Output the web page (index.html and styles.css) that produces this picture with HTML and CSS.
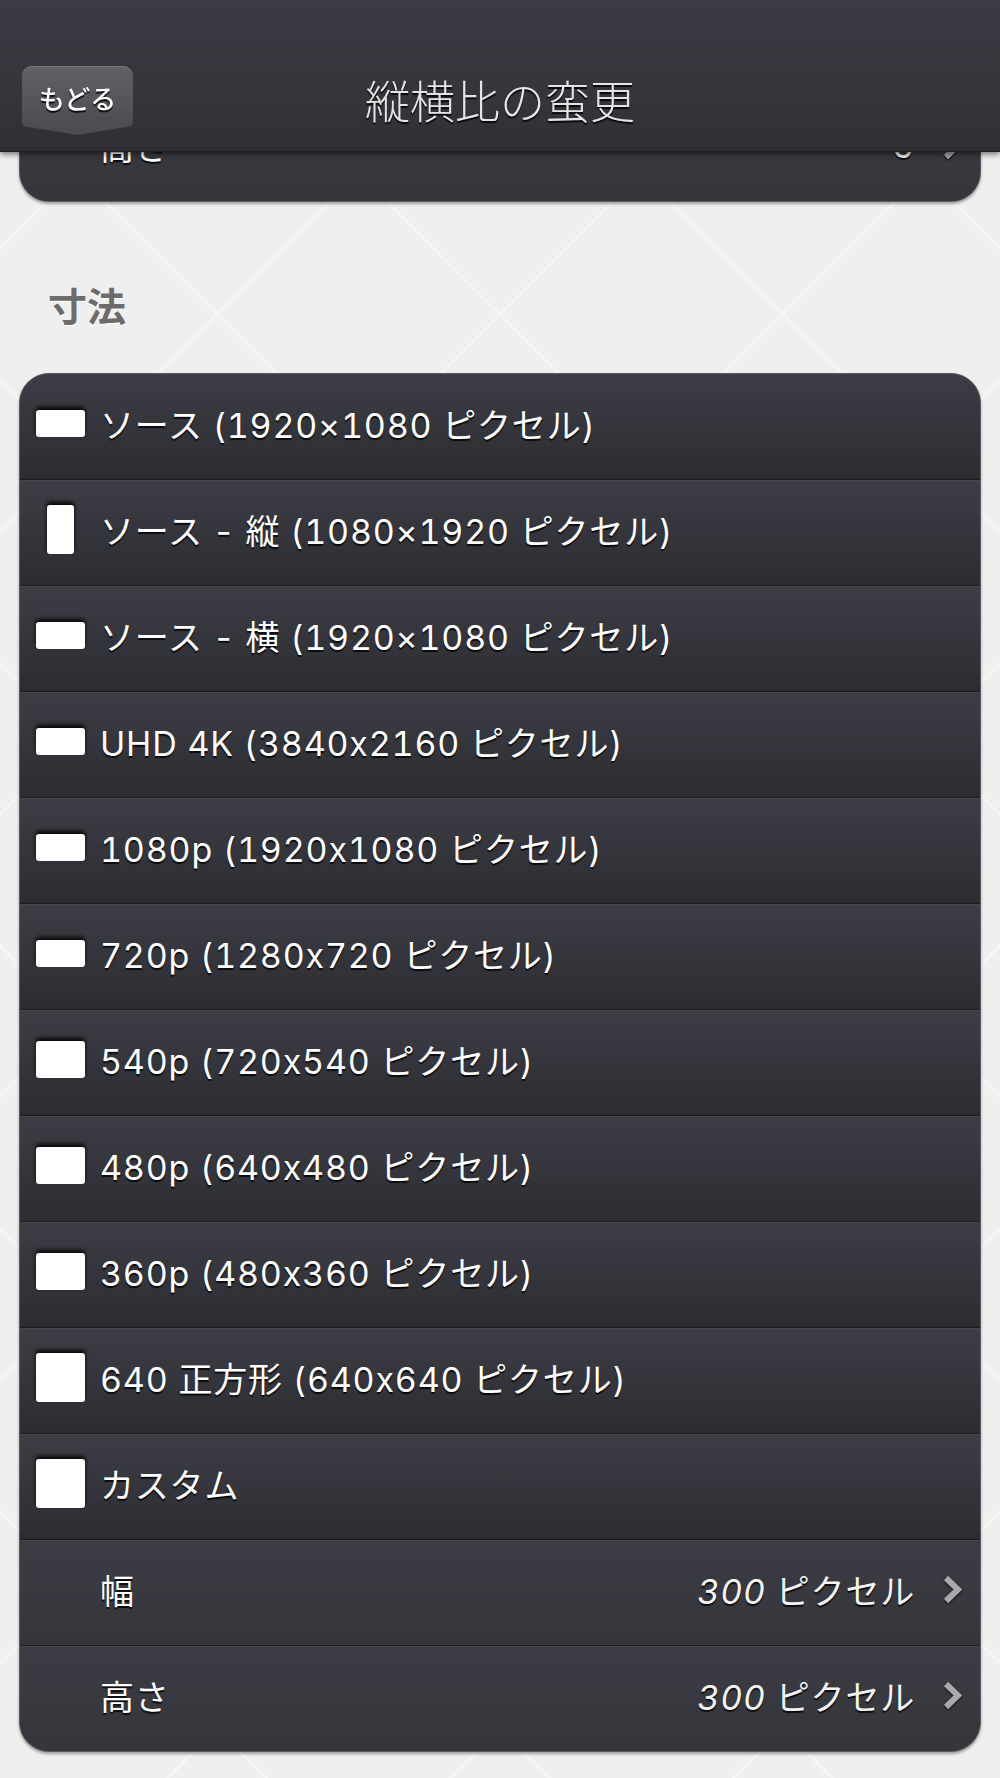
FILE: index.html
```html
<!DOCTYPE html>
<html lang="ja">
<head>
  <meta charset="UTF-8">
  <title>縦横比の変更</title>
  <link rel="stylesheet" href="styles.css">
</head>
<body>
  <header class="navbar">
    <div class="nav-left">
      <div class="back-btn">もどる</div>
    </div>
    <h1 class="nav-title">縦横比の蛮更</h1>
    <div class="nav-right"></div>
  </header>

  <main class="content">
    <div class="group">
      <div class="row row-plain">
        <span class="label">高さ</span>
        <span class="value">5</span>
        <svg class="chevron" viewBox="0 0 19 29"><polyline points="3,3 15,14.5 3,26"/></svg>
      </div>
    </div>

    <h2 class="section-title">寸法</h2>

    <div class="group">
      <div class="row">
        <span class="ratio"><span class="ratio-box wide"></span></span>
        <span class="label">ソース (1920×1080 ピクセル)</span>
      </div>
      <div class="row">
        <span class="ratio"><span class="ratio-box tall"></span></span>
        <span class="label">ソース - 縦 (1080×1920 ピクセル)</span>
      </div>
      <div class="row">
        <span class="ratio"><span class="ratio-box wide"></span></span>
        <span class="label">ソース - 横 (1920×1080 ピクセル)</span>
      </div>
      <div class="row">
        <span class="ratio"><span class="ratio-box wide"></span></span>
        <span class="label">UHD 4K (3840x2160 ピクセル)</span>
      </div>
      <div class="row">
        <span class="ratio"><span class="ratio-box wide"></span></span>
        <span class="label">1080p (1920x1080 ピクセル)</span>
      </div>
      <div class="row">
        <span class="ratio"><span class="ratio-box wide"></span></span>
        <span class="label">720p (1280x720 ピクセル)</span>
      </div>
      <div class="row">
        <span class="ratio"><span class="ratio-box std"></span></span>
        <span class="label">540p (720x540 ピクセル)</span>
      </div>
      <div class="row">
        <span class="ratio"><span class="ratio-box std"></span></span>
        <span class="label">480p (640x480 ピクセル)</span>
      </div>
      <div class="row">
        <span class="ratio"><span class="ratio-box std"></span></span>
        <span class="label">360p (480x360 ピクセル)</span>
      </div>
      <div class="row">
        <span class="ratio"><span class="ratio-box square"></span></span>
        <span class="label">640 正方形 (640x640 ピクセル)</span>
      </div>
      <div class="row">
        <span class="ratio"><span class="ratio-box square"></span></span>
        <span class="label">カスタム</span>
      </div>
      <div class="row row-plain">
        <span class="label">幅</span>
        <span class="value"><i>300</i> ピクセル</span>
        <svg class="chevron" viewBox="0 0 19 29"><polyline points="3,3 15,14.5 3,26"/></svg>
      </div>
      <div class="row row-plain">
        <span class="label">高さ</span>
        <span class="value"><i>300</i> ピクセル</span>
        <svg class="chevron" viewBox="0 0 19 29"><polyline points="3,3 15,14.5 3,26"/></svg>
      </div>
    </div>
  </main>
</body>
</html>
```

FILE: styles.css
```css
body {
  margin: 0;
  font-family: Inter, "Noto Sans CJK JP", sans-serif;
  background-color: #efefef;
  background-image:
    repeating-linear-gradient(45deg, transparent 0, transparent 196px, rgba(255,255,255,0.4) 198px, rgba(255,255,255,0.4) 200px),
    repeating-linear-gradient(-45deg, transparent 0, transparent 196px, rgba(255,255,255,0.4) 198px, rgba(255,255,255,0.4) 200px);
  color: #fff;
}

/* top bar */
.navbar {
  position: fixed;
  top: 0;
  left: 0;
  right: 0;
  height: 152px;
  box-sizing: border-box;
  padding-top: 48px;
  display: grid;
  grid-template-columns: 1fr auto 1fr;
  align-items: center;
  background: linear-gradient(#3b3c43, #34353b 70%, #2e2f35);
  border-bottom: 1px solid #1e1f23;
  box-shadow: 0 2px 6px rgba(0,0,0,0.55);
  z-index: 2;
}

.nav-left {
  display: flex;
}

.back-btn {
  position: relative;
  width: 111px;
  height: 60px;
  margin: 0 0 8px 22px;
  box-sizing: border-box;
  border-radius: 10px 10px 4px 4px;
  background: linear-gradient(#616268, #4c4d53);
  box-shadow: inset 0 1px 0 rgba(255,255,255,0.15);
  display: flex;
  align-items: center;
  justify-content: center;
  padding-top: 3px;
  font-family: "Noto Sans CJK JP", sans-serif;
  font-size: 26px;
  font-weight: 500;
  text-shadow: 0 2px 1px rgba(0,0,0,0.85);
}

.back-btn::after {
  content: "";
  position: absolute;
  left: 0;
  top: 60px;
  border-left: 55.5px solid transparent;
  border-right: 55.5px solid transparent;
  border-top: 9px solid #4c4d53;
}

.nav-title {
  margin: 0;
  font-family: "Noto Sans CJK JP", sans-serif;
  font-size: 45px;
  font-weight: 300;
  color: #e4e4e4;
  text-shadow: 0 2px 1px rgba(0,0,0,0.85);
}

/* page */
.content {
  padding: 95px 0 40px;
}

.section-title {
  margin: 78px 0 45px 48px;
  font-family: "Noto Sans CJK JP", sans-serif;
  font-size: 39px;
  line-height: 48px;
  font-weight: bold;
  color: #6c6c6c;
  text-shadow: 0 1px 0 #fff;
}

.group {
  margin: 0 19px;
  border: 1px solid #5d5e63;
  border-radius: 30px;
  overflow: hidden;
  background: #34353b;
  box-shadow: 0 2px 3px rgba(0,0,0,0.35);
}

.row {
  height: 106px;
  box-sizing: border-box;
  display: flex;
  align-items: center;
  gap: 15px;
  padding: 0 18px 6px 16px;
  border-top: 1px solid #1c1d21;
  box-shadow: inset 0 1px 0 #46474d;
  background: linear-gradient(#3d3e45, #2c2d33);
  font-size: 34px;
  font-weight: 400;
  letter-spacing: 0.8px;
  font-variant-numeric: tabular-nums;
  text-shadow: 0 2px 1px rgba(0,0,0,0.8);
}

.row:first-child {
  height: 105px;
  border-top: none;
  box-shadow: none;
}

.row-plain {
  padding-left: 80px;
  background: linear-gradient(#3c3d44, #35363c);
}

.label {
  flex: 1;
  white-space: nowrap;
}

.value {
  color: #f4f4f4;
  margin-right: 13px;
}

.value i {
  font-style: italic;
}

.chevron {
  width: 19px;
  height: 29px;
  fill: none;
  stroke: #a9a9ab;
  stroke-width: 6;
  stroke-linecap: butt;
  filter: drop-shadow(0 1px 1px rgba(0,0,0,0.8));
}

/* aspect ratio swatches */
.ratio {
  width: 49px;
  display: flex;
  justify-content: center;
  align-items: center;
}

.ratio-box {
  display: block;
  background: #fff;
  border-radius: 3px;
  box-shadow: 0 -3px 4px rgba(0,0,0,0.9);
}

.ratio-box.wide { width: 49px; height: 27px; }
.ratio-box.tall { width: 27px; height: 49px; }
.ratio-box.std { width: 49px; height: 37px; }
.ratio-box.square { width: 49px; height: 49px; }
```
